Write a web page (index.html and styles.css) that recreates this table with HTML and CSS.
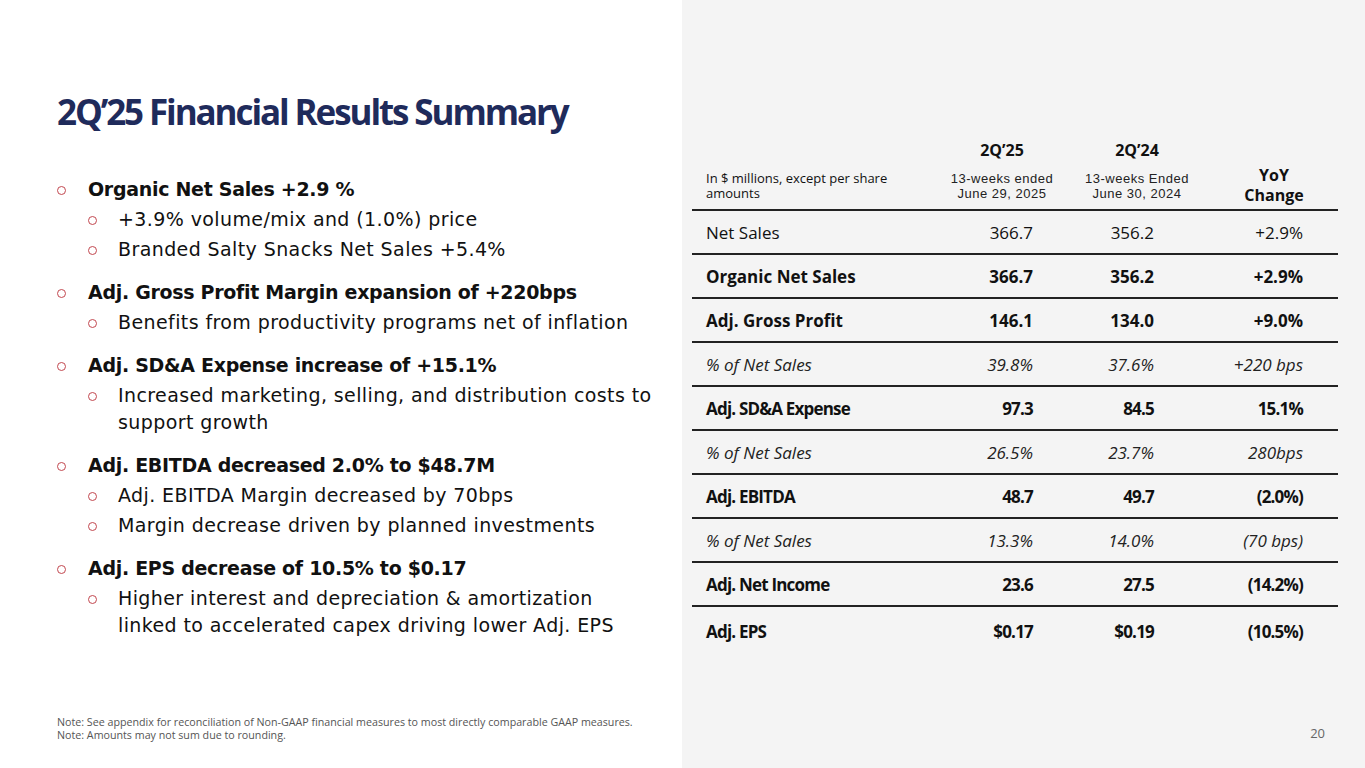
FILE: index.html
```html
<!DOCTYPE html>
<html lang="en">
<head>
<meta charset="utf-8">
<title>2Q'25 Financial Results Summary</title>
<link rel="stylesheet" href="styles.css">
</head>
<body>
<div class="slide">
  <section class="left">
    <h1 class="title">2Q’25 Financial Results Summary</h1>
    <ul class="bullets">
      <li class="group">
        <div class="item main"><span class="mark"></span><span class="txt">Organic Net Sales +2.9 %</span></div>
        <div class="item sub"><span class="mark"></span><span class="txt">+3.9% volume/mix and (1.0%) price</span></div>
        <div class="item sub"><span class="mark"></span><span class="txt">Branded Salty Snacks Net Sales +5.4%</span></div>
      </li>
      <li class="group">
        <div class="item main"><span class="mark"></span><span class="txt">Adj. Gross Profit Margin expansion of +220bps</span></div>
        <div class="item sub"><span class="mark"></span><span class="txt">Benefits from productivity programs net of inflation</span></div>
      </li>
      <li class="group">
        <div class="item main"><span class="mark"></span><span class="txt">Adj. SD&amp;A Expense increase of +15.1%</span></div>
        <div class="item sub"><span class="mark"></span><span class="txt">Increased marketing, selling, and distribution costs to support growth</span></div>
      </li>
      <li class="group">
        <div class="item main"><span class="mark"></span><span class="txt">Adj. EBITDA decreased 2.0% to $48.7M</span></div>
        <div class="item sub"><span class="mark"></span><span class="txt">Adj. EBITDA Margin decreased by 70bps</span></div>
        <div class="item sub"><span class="mark"></span><span class="txt">Margin decrease driven by planned investments</span></div>
      </li>
      <li class="group">
        <div class="item main"><span class="mark"></span><span class="txt">Adj. EPS decrease of 10.5% to $0.17</span></div>
        <div class="item sub"><span class="mark"></span><span class="txt">Higher interest and depreciation &amp; amortization linked to accelerated capex driving lower Adj. EPS</span></div>
      </li>
    </ul>
    <div class="notes">
      <p>Note: See appendix for reconciliation of Non-GAAP financial measures to most directly comparable GAAP measures.</p>
      <p>Note: Amounts may not sum due to rounding.</p>
    </div>
  </section>
  <section class="right">
    <table class="fin">
      <colgroup>
        <col class="c1"><col class="c2"><col class="c3"><col class="c4">
      </colgroup>
      <thead>
        <tr class="period">
          <th></th><th>2Q’25</th><th>2Q’24</th><th></th>
        </tr>
        <tr class="sublabel">
          <th class="lbl">In $ millions, except per share amounts</th>
          <th class="small"><span class="ln">13-weeks ended</span><span class="ln">June 29, 2025</span></th>
          <th class="small"><span class="ln">13-weeks Ended</span><span class="ln">June 30, 2024</span></th>
          <th class="yoy"><span class="ln">YoY</span><span class="ln">Change</span></th>
        </tr>
      </thead>
      <tbody>
        <tr><td class="lbl">Net Sales</td><td class="v2">366.7</td><td class="v3">356.2</td><td class="v4">+2.9%</td></tr>
        <tr class="b"><td class="lbl">Organic Net Sales</td><td class="v2">366.7</td><td class="v3">356.2</td><td class="v4">+2.9%</td></tr>
        <tr class="b"><td class="lbl">Adj. Gross Profit</td><td class="v2">146.1</td><td class="v3">134.0</td><td class="v4">+9.0%</td></tr>
        <tr class="i"><td class="lbl">% of Net Sales</td><td class="v2">39.8%</td><td class="v3">37.6%</td><td class="v4">+220 bps</td></tr>
        <tr class="b tight"><td class="lbl">Adj. SD&amp;A Expense</td><td class="v2">97.3</td><td class="v3">84.5</td><td class="v4">15.1%</td></tr>
        <tr class="i"><td class="lbl">% of Net Sales</td><td class="v2">26.5%</td><td class="v3">23.7%</td><td class="v4">280bps</td></tr>
        <tr class="b tight"><td class="lbl">Adj. EBITDA</td><td class="v2">48.7</td><td class="v3">49.7</td><td class="v4">(2.0%)</td></tr>
        <tr class="i"><td class="lbl">% of Net Sales</td><td class="v2">13.3%</td><td class="v3">14.0%</td><td class="v4">(70 bps)</td></tr>
        <tr class="b tight"><td class="lbl">Adj. Net Income</td><td class="v2">23.6</td><td class="v3">27.5</td><td class="v4">(14.2%)</td></tr>
        <tr class="b tight last"><td class="lbl">Adj. EPS</td><td class="v2">$0.17</td><td class="v3">$0.19</td><td class="v4">(10.5%)</td></tr>
      </tbody>
    </table>
    <div class="pagenum">20</div>
  </section>
</div>
</body>
</html>
```
FILE: styles.css
```css
* { box-sizing: border-box; }
html, body { margin: 0; padding: 0; }
body {
  font-family: "Open Sans", "Liberation Sans", sans-serif;
  color: #111;
  background: #fff;
}
.slide {
  width: 1365px;
  height: 768px;
  display: grid;
  grid-template-columns: 682px 683px;
  overflow: hidden;
}
.left {
  display: flex;
  flex-direction: column;
  padding: 90px 0 0 57px;
}
.title {
  margin: 0;
  font-size: 35px;
  line-height: 44px;
  font-weight: 700;
  letter-spacing: -2.1px;
  color: #1f2b5b;
}
.bullets {
  list-style: none;
  margin: 42px 0 0 0;
  padding: 0;
  width: 600px;
  font-family: "DejaVu Sans", "Open Sans", sans-serif;
}
.group + .group { margin-top: 16px; }
.item {
  display: flex;
  align-items: flex-start;
  font-size: 19px;
  line-height: 27px;
}
.item.sub { margin-top: 3px; padding-left: 31px; }
.item.sub .txt { letter-spacing: 0.4px; }
.item.main .txt { font-weight: 700; letter-spacing: -0.3px; }
.mark {
  flex: none;
  width: 9px;
  height: 9px;
  border: 1px solid #c2474f;
  border-radius: 50%;
  margin-top: 10px;
  margin-right: 22px;
}
.item.sub .mark { margin-right: 21px; }
.notes {
  margin-top: auto;
  padding-bottom: 26px;
  font-size: 10.7px;
  line-height: 13px;
  color: #555;
}
.notes p { margin: 0; }

.right {
  background: #f4f4f4;
  display: flex;
  flex-direction: column;
  padding: 138px 27px 0 10px;
}
.fin {
  border-collapse: collapse;
  width: 646px;
  table-layout: fixed;
}
.c1 { width: 248px; }
.c2 { width: 124px; }
.c3 { width: 146px; }
.c4 { width: 128px; }
.fin th { font-weight: 700; padding: 0; }
.period th {
  font-size: 16px;
  height: 24px;
  line-height: 24px;
  text-align: center;
}
.sublabel th {
  border-bottom: 2px solid #222;
  height: 48px;
  vertical-align: bottom;
  padding-bottom: 8px;
}
.ln { display: block; }
.sublabel .lbl {
  text-align: left;
  font-weight: 400;
  font-size: 13px;
  line-height: 15px;
  padding-left: 14px;
  padding-right: 30px;
}
.sublabel .small {
  font-family: "Liberation Sans", Arial, sans-serif;
  font-weight: 400;
  font-size: 13px;
  line-height: 15px;
  letter-spacing: 0.5px;
  text-align: center;
  color: #222;
}
.sublabel .small .ln { height: 15px; }
.sublabel .yoy {
  font-size: 16px;
  line-height: 20px;
  text-align: center;
  padding-bottom: 4px;
}
.sublabel .yoy .ln { height: 20px; }
.fin td {
  font-size: 17px;
  height: 44px;
  padding: 0;
  border-bottom: 2px solid #222;
  vertical-align: middle;
}
.fin td.lbl { padding-left: 14px; }
.fin td.v2 { text-align: right; padding-right: 31px; }
.fin td.v3 { text-align: right; padding-right: 56px; }
.fin td.v4 { text-align: right; padding-right: 35px; }
.fin tr.b td { font-weight: 700; }
.fin tr.tight td { letter-spacing: -0.8px; }
.fin tr.i td { font-style: italic; color: #222; }
.fin tr.last td { border-bottom: none; height: 50px; }
.pagenum {
  margin-top: auto;
  align-self: flex-end;
  margin-right: 13px;
  margin-bottom: 26px;
  font-size: 13px;
  color: #666;
}
```
